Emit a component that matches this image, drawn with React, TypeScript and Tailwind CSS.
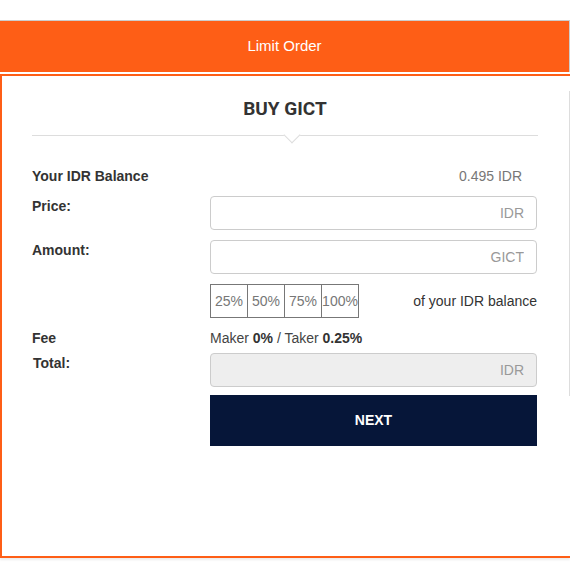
import React from 'react';

const pcts = ['25%', '50%', '75%', '100%'];

function Field({ unit, disabled = false }: { unit: string; disabled?: boolean }) {
  return (
    <input
      type="text"
      placeholder={unit}
      disabled={disabled}
      className={`w-full h-[34px] rounded-[4px] border border-[#ccc] px-3 text-right text-[14px] placeholder:text-[#999] outline-none ${
        disabled ? 'bg-[#eee]' : 'bg-white'
      }`}
    />
  );
}

export default function App() {
  return (
    <div className="w-[570px] h-[586px] bg-white pt-5 font-['Liberation_Sans',Arial,sans-serif] text-[#333]">
      <div className="h-[52px] border-t border-r border-[#ccc] bg-[#fe5e16] flex items-center justify-center">
        <span className="text-[15px] text-white">Limit Order</span>
      </div>

      <div className="mt-[2px] h-[484px] border-2 border-r-0 border-[#fe5e16] shadow-[0_2px_2px_rgba(0,0,0,0.08)] flex">
        <div className="w-[536px] pl-[30px]">
          <h2 className="pt-[21px] text-center text-[19px] leading-6 font-bold text-[#333] font-['Roboto',sans-serif]">
            BUY GICT
          </h2>
          <div className="relative mt-[14px] h-px bg-[#ddd]">
            <div className="absolute left-[254px] top-[-6px] w-3 h-3 bg-white border-r border-b border-[#ddd] rotate-45" />
          </div>

          <div className="mt-8 flex items-center leading-4 text-[14px]">
            <span className="w-[178px] font-bold">Your IDR Balance</span>
            <span className="w-[327px] text-right pr-[15px] text-[#777]">0.495 IDR</span>
          </div>

          <div className="mt-3 flex">
            <label className="w-[178px] leading-5 text-[14px] font-bold">Price:</label>
            <div className="w-[327px]"><Field unit="IDR" /></div>
          </div>

          <div className="mt-[10px] flex">
            <label className="w-[178px] leading-5 text-[14px] font-bold">Amount:</label>
            <div className="w-[327px]"><Field unit="GICT" /></div>
          </div>

          <div className="mt-[10px] flex">
            <div className="w-[178px]" />
            <div className="w-[327px] flex items-center justify-between">
              <div className="flex">
                {pcts.map((p, i) => (
                  <button
                    key={p}
                    className={`w-[38px] h-[34px] border border-[#777] text-[14px] text-[#777] flex items-center justify-center ${i > 0 ? '-ml-px' : ''}`}
                  >
                    {p}
                  </button>
                ))}
              </div>
              <span className="text-[14px] text-[#333]">of your IDR balance</span>
            </div>
          </div>

          <div className="mt-[10px] flex leading-5 text-[14px]">
            <span className="w-[178px] font-bold">Fee</span>
            <span className="text-[#444]">
              Maker <b className="text-[#333]">0%</b> / Taker <b className="text-[#333]">0.25%</b>
            </span>
          </div>

          <div className="mt-[5px] flex">
            <label className="w-[178px] pl-px leading-5 text-[14px] font-bold">Total:</label>
            <div className="w-[327px]"><Field unit="IDR" disabled /></div>
          </div>

          <div className="mt-[8px] flex">
            <div className="w-[178px]" />
            <button className="w-[327px] h-[51px] bg-[#061639] text-white text-[14px] font-bold">NEXT</button>
          </div>
        </div>
        <div className="flex-1 flex justify-end">
          <div className="mt-[15px] w-px h-[305px] bg-[#ddd]" />
        </div>
      </div>
    </div>
  );
}
